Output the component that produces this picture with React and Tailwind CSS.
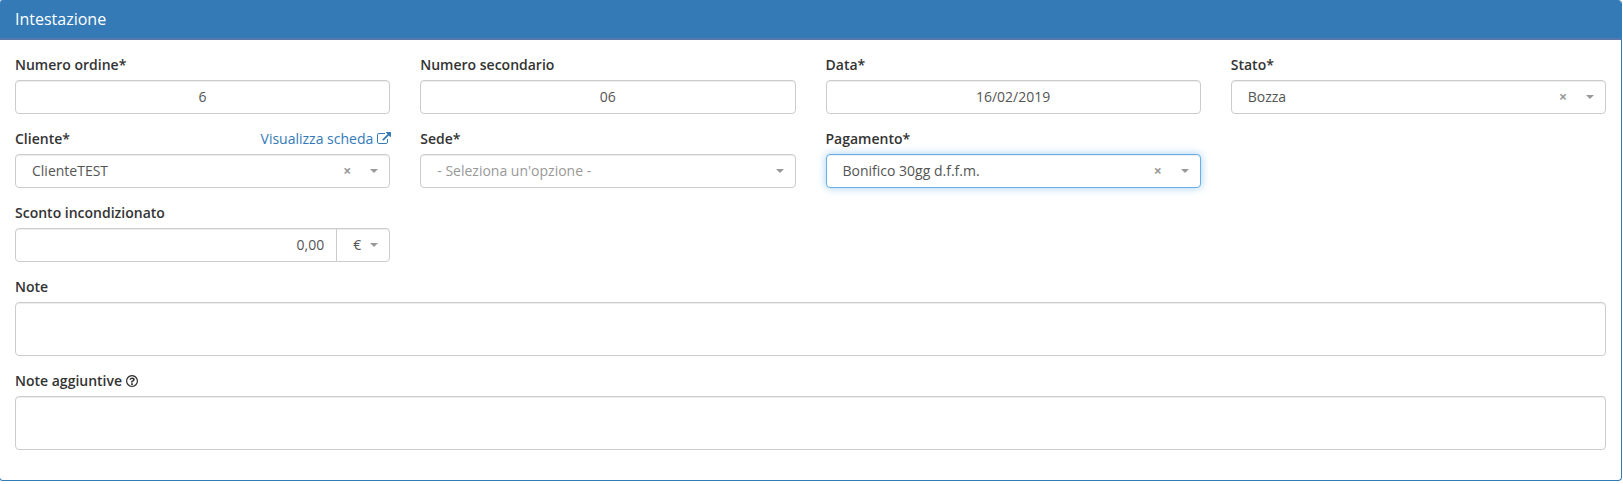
const cx = (...c) => c.filter(Boolean).join(" ");

const control =
  "block h-[34px] w-full rounded-[4px] border bg-white pb-[2px] text-[#555] shadow-[inset_0_1px_1px_rgba(0,0,0,0.075)] outline-none";

function Field({ label, extra, children }) {
  return (
    <div className="mb-[15px] min-w-0">
      <div className="mb-[5px] flex h-5 items-center justify-between">
        <label className="flex items-center font-semibold">{label}</label>
        {extra}
      </div>
      {children}
    </div>
  );
}

function Caret() {
  return (
    <span className="h-0 w-0 border-x-4 border-t-4 border-x-transparent border-t-[#999]" />
  );
}

function Select({ value, placeholder, clearable, focused }) {
  return (
    <div
      className={cx(
        "flex h-[34px] w-full items-center rounded-[4px] border bg-white pr-[11px] pl-4",
        focused
          ? "border-[#66afe9] shadow-[inset_0_1px_1px_rgba(0,0,0,0.075),0_0_8px_rgba(102,175,233,0.6)]"
          : "border-[#ccc] shadow-[inset_0_1px_1px_rgba(0,0,0,0.075)]",
      )}
    >
      <span className={cx("flex-1", value ? "text-[#555]" : "text-[#999]")}>
        {value || placeholder}
      </span>
      {clearable && <span className="mr-[19px] text-[14px] font-bold text-[#999]">×</span>}
      <Caret />
    </div>
  );
}

function ExternalLinkIcon() {
  return (
    <svg className="ml-1 h-[14px] w-[14px]" viewBox="0 0 1792 1792" fill="currentColor">
      <path d="M1408 928v320q0 119-84.500 203.500t-203.500 84.500h-832q-119 0-203.500-84.500t-84.500-203.500v-832q0-119 84.500-203.500t203.500-84.500h704q14 0 23 9t9 23v64q0 14-9 23t-23 9h-704q-66 0-113 47t-47 113v832q0 66 47 113t113 47h832q66 0 113-47t47-113v-320q0-14 9-23t23-9h64q14 0 23 9t9 23zm384-864v512q0 26-19 45t-45 19-45-19l-176-176-652 652q-10 10-23 10t-23-10l-114-114q-10-10-10-23t10-23l652-652-176-176q-19-19-19-45t19-45 45-19h512q26 0 45 19t19 45z" />
    </svg>
  );
}

function HelpIcon() {
  return (
    <svg className="ml-1 h-3 w-3" viewBox="0 0 1536 1536" fill="currentColor">
      <path d="M880 1072v160q0 14-9 23t-23 9h-160q-14 0-23-9t-9-23v-160q0-14 9-23t23-9h160q14 0 23 9t9 23zm208-464q0 50-15 90t-45.500 69-52 44-59.500 36q-32 18-46.500 28t-26 24-11.500 29v32q0 14-9 23t-23 9h-112q-14 0-23-9t-9-23v-68q0-35 10.500-64.500t24-47.500 39-35.500 41-25.500 44.500-21q53-25 75-43t22-49q0-42-43.500-71.500t-95.500-29.500q-56 0-95 27-29 20-80 83-9 12-25 12-11 0-19-6l-108-82q-10-7-12-20t5-23q122-192 349-192 129 0 238.500 89.500t109.500 214.500zm-320-448q-124 0-236.500 48.500t-194 130-130 194-48.500 236.500 48.500 236.500 130 194 194 130 236.500 48.500 236.500-48.500 194-130 130-194 48.500-236.500-48.500-236.500-130-194-194-130-236.500-48.500zm768 608q0 209-103 385.500t-279.500 279.500-385.500 103-385.500-103-279.500-279.500-103-385.500 103-385.500 279.500-279.500 385.500-103 385.500 103 279.500 279.500 103 385.500z" />
    </svg>
  );
}

export default function App() {
  return (
    <div className="h-[484px] overflow-hidden bg-white font-['Open_Sans',sans-serif] text-[14px] leading-5 text-[#333]">
      <section className="-ml-px h-[481px] w-[1623px] overflow-hidden rounded-[4px] border border-t-0 border-[#337ab7]">
        <header className="flex h-10 items-center border-b-2 border-[#5878ab] bg-[#337ab7] pl-[15px] text-[16px] text-white">
          <h3>Intestazione</h3>
        </header>
        <div className="px-[15px] pt-[15px]">
          <div className="grid grid-cols-4 gap-x-[30px]">
            <Field label="Numero ordine*">
              <input className={cx(control, "border-[#ccc] text-center")} defaultValue="6" />
            </Field>
            <Field label="Numero secondario">
              <input className={cx(control, "border-[#ccc] text-center")} defaultValue="06" />
            </Field>
            <Field label="Data*">
              <input className={cx(control, "border-[#ccc] text-center")} defaultValue="16/02/2019" />
            </Field>
            <Field label="Stato*">
              <Select value="Bozza" clearable />
            </Field>
            <Field
              label="Cliente*"
              extra={
                <a className="-mr-px flex items-center text-[#337ab7]">
                  Visualizza scheda
                  <ExternalLinkIcon />
                </a>
              }
            >
              <Select value="ClienteTEST" clearable />
            </Field>
            <Field label="Sede*">
              <Select placeholder="- Seleziona un'opzione -" />
            </Field>
            <Field label="Pagamento*">
              <Select value="Bonifico 30gg d.f.f.m." clearable focused />
            </Field>
            <div />
            <Field label="Sconto incondizionato">
              <div className="flex h-[34px] rounded-[4px] border border-[#ccc] text-[#555] shadow-[inset_0_1px_1px_rgba(0,0,0,0.075)]">
                <input
                  className="min-w-0 flex-1 bg-transparent pr-3 text-right outline-none"
                  defaultValue="0,00"
                />
                <div className="flex w-[53px] items-center justify-between border-l border-[#ccc] pr-[11px] pl-4">
                  <span>€</span>
                  <Caret />
                </div>
              </div>
            </Field>
          </div>
          <Field label="Note">
            <textarea className="block h-[54px] w-full resize-none rounded-[4px] border border-[#ccc] shadow-[inset_0_1px_1px_rgba(0,0,0,0.075)] outline-none" />
          </Field>
          <Field
            label={
              <>
                Note aggiuntive
                <HelpIcon />
              </>
            }
          >
            <textarea className="block h-[54px] w-full resize-none rounded-[4px] border border-[#ccc] shadow-[inset_0_1px_1px_rgba(0,0,0,0.075)] outline-none" />
          </Field>
        </div>
      </section>
    </div>
  );
}
